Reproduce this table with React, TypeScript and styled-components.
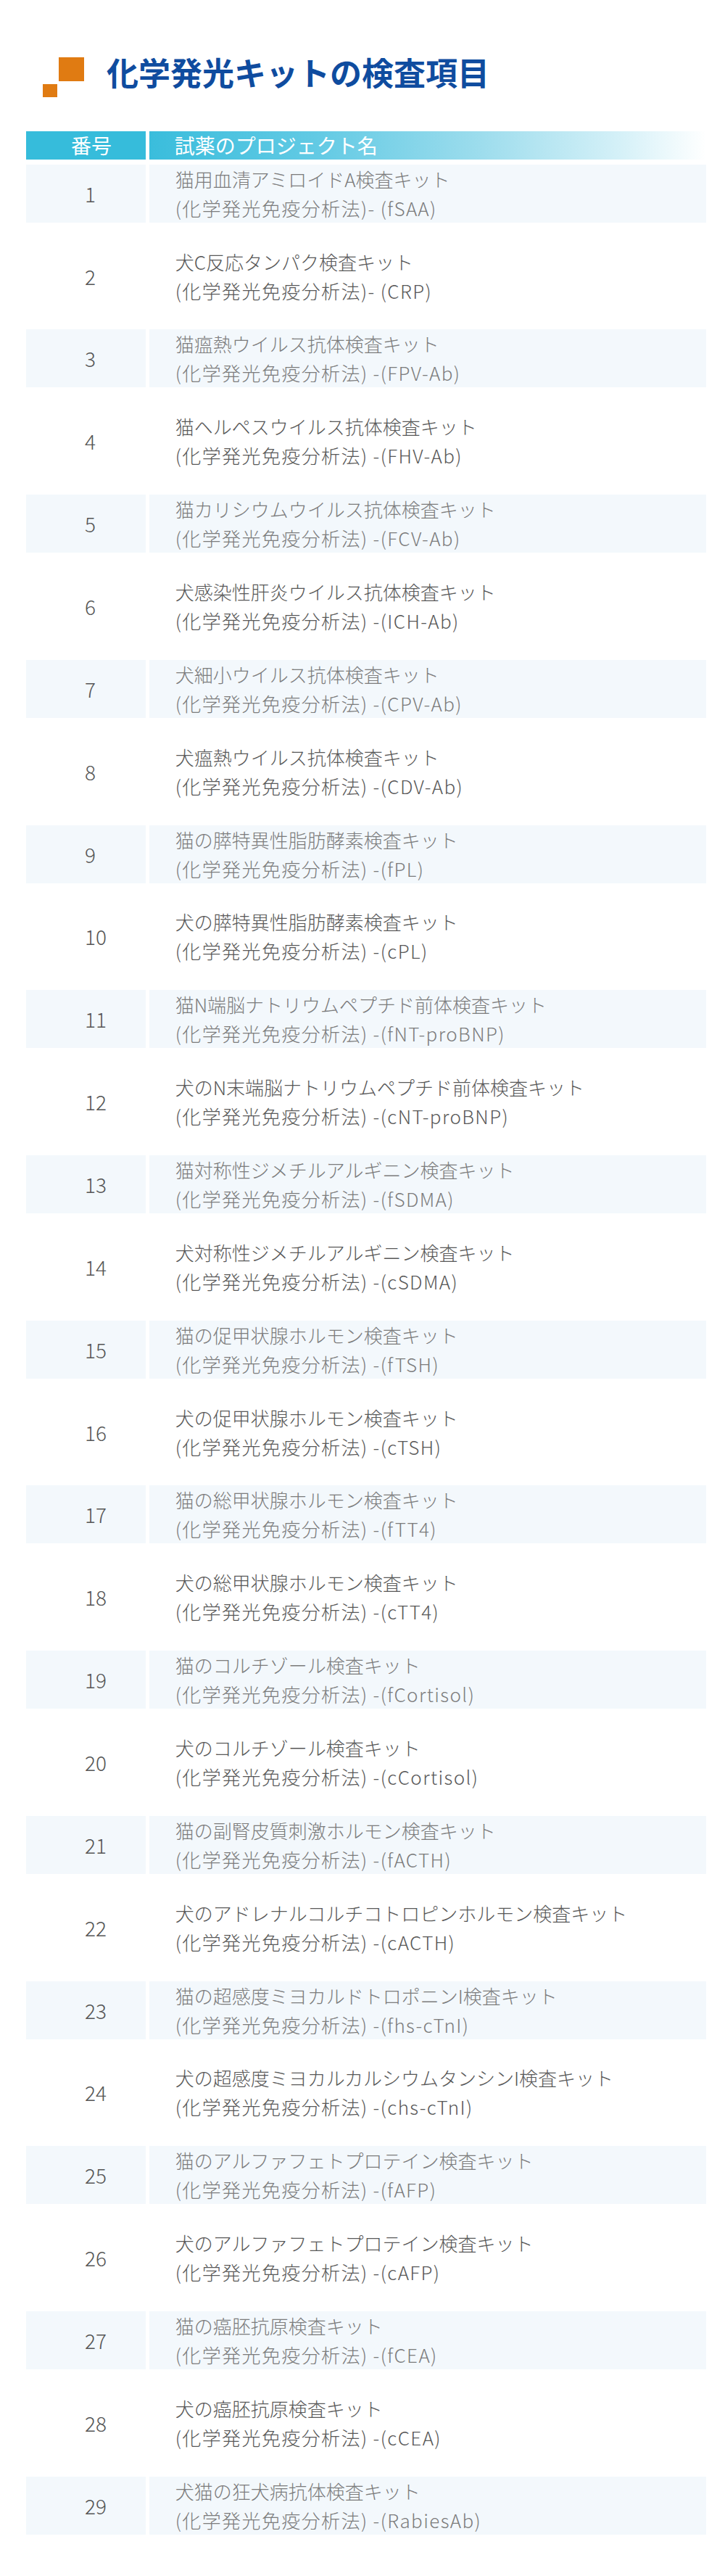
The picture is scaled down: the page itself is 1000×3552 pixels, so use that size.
import React from 'react';
import styled, { createGlobalStyle } from 'styled-components';

const GlobalStyle = createGlobalStyle`
  html, body {
    margin: 0;
    padding: 0;
    background: #ffffff;
  }
  body {
    font-family: 'Noto Sans CJK JP', 'Noto Sans', sans-serif;
  }
`;

const Page = styled.div`
  width: 1000px;
  padding-bottom: 60px;
`;

const TitleRow = styled.div`
  display: flex;
  align-items: flex-start;
  padding: 76.5px 0 0 59px;
`;

const TitleMark = styled.svg`
  display: block;
  margin-top: 2.5px;
  margin-right: 31px;
  flex-shrink: 0;
`;

const Title = styled.h1`
  margin: 0;
  font-size: 44px;
  line-height: 44px;
  font-weight: 700;
  color: #0f4c9f;
`;

const Table = styled.div`
  margin: 46.7px 26px 0 36px;
  display: flex;
  flex-direction: column;
  gap: 36.87px;
`;

const HeaderRow = styled.div`
  display: grid;
  grid-template-columns: 165px 1fr;
  column-gap: 4.7px;
  height: 39.3px;
  margin-bottom: -30.17px;
`;

const HeadCell = styled.div<{ $wide?: boolean }>`
  display: flex;
  align-items: center;
  padding-left: ${(p) => (p.$wide ? '35px' : '62px')};
  font-size: 28px;
  line-height: 39.3px;
  color: #ffffff;
  background: ${(p) =>
    p.$wide
      ? 'linear-gradient(to right, #3abddc 0%, #62cae4 30%, #9edded 60%, #d6f1f8 85%, #ffffff 100%)'
      : '#36bcdb'};
`;

const Row = styled.div<{ $shaded: boolean }>`
  display: grid;
  grid-template-columns: 165px 1fr;
  column-gap: 4.7px;
  height: 77px;

  & > div {
    background: ${(p) => (p.$shaded ? '#f3f8fc' : 'transparent')};
  }
`;

const NumCell = styled.div`
  display: flex;
  align-items: center;
  padding-left: 81px;
  font-size: 28px;
  font-weight: 300;
  color: #555555;
`;

const NameCell = styled.div<{ $light: boolean }>`
  display: flex;
  flex-direction: column;
  justify-content: center;
  padding-left: 36px;
  font-size: 26px;
  font-weight: 300;
  line-height: 40px;
  white-space: nowrap;
  color: ${(p) => (p.$light ? '#7c7c7c' : '#585858')};
`;

const Method = styled.span`
  letter-spacing: 1.4px;
`;

const items: [string, string][] = [
  ['猫用血清アミロイドA検査キット', '(化学発光免疫分析法)- (fSAA)'],
  ['犬C反応タンパク検査キット', '(化学発光免疫分析法)- (CRP)'],
  ['猫瘟熱ウイルス抗体検査キット', '(化学発光免疫分析法) -(FPV-Ab)'],
  ['猫ヘルペスウイルス抗体検査キット', '(化学発光免疫分析法) -(FHV-Ab)'],
  ['猫カリシウムウイルス抗体検査キット', '(化学発光免疫分析法) -(FCV-Ab)'],
  ['犬感染性肝炎ウイルス抗体検査キット', '(化学発光免疫分析法) -(ICH-Ab)'],
  ['犬細小ウイルス抗体検査キット', '(化学発光免疫分析法) -(CPV-Ab)'],
  ['犬瘟熱ウイルス抗体検査キット', '(化学発光免疫分析法) -(CDV-Ab)'],
  ['猫の膵特異性脂肪酵素検査キット', '(化学発光免疫分析法) -(fPL)'],
  ['犬の膵特異性脂肪酵素検査キット', '(化学発光免疫分析法) -(cPL)'],
  ['猫N端脳ナトリウムペプチド前体検査キット', '(化学発光免疫分析法) -(fNT-proBNP)'],
  ['犬のN末端脳ナトリウムペプチド前体検査キット', '(化学発光免疫分析法) -(cNT-proBNP)'],
  ['猫対称性ジメチルアルギニン検査キット', '(化学発光免疫分析法) -(fSDMA)'],
  ['犬対称性ジメチルアルギニン検査キット', '(化学発光免疫分析法) -(cSDMA)'],
  ['猫の促甲状腺ホルモン検査キット', '(化学発光免疫分析法) -(fTSH)'],
  ['犬の促甲状腺ホルモン検査キット', '(化学発光免疫分析法) -(cTSH)'],
  ['猫の総甲状腺ホルモン検査キット', '(化学発光免疫分析法) -(fTT4)'],
  ['犬の総甲状腺ホルモン検査キット', '(化学発光免疫分析法) -(cTT4)'],
  ['猫のコルチゾール検査キット', '(化学発光免疫分析法) -(fCortisol)'],
  ['犬のコルチゾール検査キット', '(化学発光免疫分析法) -(cCortisol)'],
  ['猫の副腎皮質刺激ホルモン検査キット', '(化学発光免疫分析法) -(fACTH)'],
  ['犬のアドレナルコルチコトロピンホルモン検査キット', '(化学発光免疫分析法) -(cACTH)'],
  ['猫の超感度ミヨカルドトロポニンI検査キット', '(化学発光免疫分析法) -(fhs-cTnI)'],
  ['犬の超感度ミヨカルカルシウムタンシンI検査キット', '(化学発光免疫分析法) -(chs-cTnI)'],
  ['猫のアルファフェトプロテイン検査キット', '(化学発光免疫分析法) -(fAFP)'],
  ['犬のアルファフェトプロテイン検査キット', '(化学発光免疫分析法) -(cAFP)'],
  ['猫の癌胚抗原検査キット', '(化学発光免疫分析法) -(fCEA)'],
  ['犬の癌胚抗原検査キット', '(化学発光免疫分析法) -(cCEA)'],
  ['犬猫の狂犬病抗体検査キット', '(化学発光免疫分析法) -(RabiesAb)'],
];

export default function App() {
  return (
    <Page>
      <GlobalStyle />
      <TitleRow>
        <TitleMark width="57" height="55" viewBox="0 0 57 55">
          <rect x="22" y="0" width="35" height="33" fill="#e07b12" />
          <rect x="0" y="37" width="20" height="18" fill="#e07b12" />
        </TitleMark>
        <Title>化学発光キットの検査項目</Title>
      </TitleRow>
      <Table>
        <HeaderRow>
          <HeadCell>番号</HeadCell>
          <HeadCell $wide>試薬のプロジェクト名</HeadCell>
        </HeaderRow>
        {items.map(([name, method], i) => (
          <Row key={i} $shaded={i % 2 === 0}>
            <NumCell>{i + 1}</NumCell>
            <NameCell $light={i % 2 === 0}>
              <span>{name}</span>
              <Method>{method}</Method>
            </NameCell>
          </Row>
        ))}
      </Table>
    </Page>
  );
}
